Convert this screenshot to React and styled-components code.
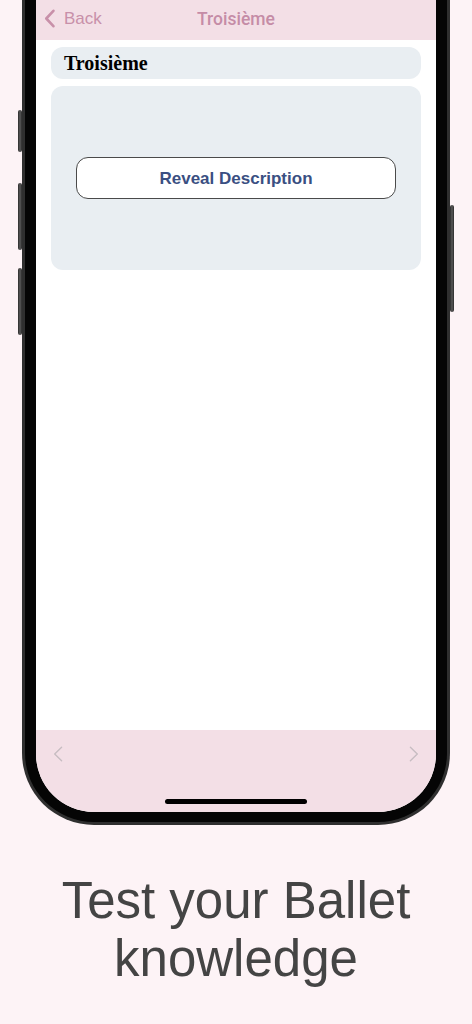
import React from "react";
import styled, { createGlobalStyle } from "styled-components";

const Global = createGlobalStyle`
  html, body { margin: 0; padding: 0; background: #fdf3f6; }
  body { font-family: "Liberation Sans", Arial, sans-serif; }
`;

const Page = styled.div`
  width: 472px;
  height: 1024px;
  overflow: hidden;
  display: flex;
  flex-direction: column;
  align-items: center;
  background: #fdf3f6;
`;

const Frame = styled.div`
  position: relative;
  width: 428px;
  box-sizing: border-box;
  background: #050505;
  border: 3px solid #2f2f2f;
  border-top: none;
  border-radius: 0 0 72px 72px;
  padding: 0 11px 10px;
`;

const SideButton = styled.div`
  position: absolute;
  width: 4px;
  top: ${(p) => p.$top}px;
  height: ${(p) => p.$h}px;
  ${(p) => (p.$right ? "right: -7px;" : "left: -7px;")}
  background: linear-gradient(90deg, #2a2a2a, #5a5a5a 50%, #2a2a2a);
  border-radius: 2px;
`;

const Screen = styled.div`
  position: relative;
  height: 812px;
  background: #ffffff;
  border-radius: 0 0 58px 58px;
  overflow: hidden;
  display: flex;
  flex-direction: column;
`;

const NavBar = styled.div`
  height: 40px;
  flex-shrink: 0;
  background: #f3dfe6;
  display: grid;
  grid-template-columns: 1fr auto 1fr;
  align-items: center;
  color: #c890a9;
  font-size: 17px;
  padding-bottom: 3px;
  box-sizing: border-box;
`;

const BackLink = styled.div`
  display: flex;
  align-items: center;
  gap: 8px;
  padding-left: 8px;
`;

const NavTitle = styled.div`
  font-family: Roboto, "Liberation Sans", Arial, sans-serif;
  font-weight: 500;
  font-size: 17.5px;
  color: #c58ca6;
`;

const Content = styled.div`
  flex: 1;
  padding: 7px 15px;
  display: flex;
  flex-direction: column;
  gap: 7px;
`;

const Card = styled.div`
  background: #e9eef2;
  border-radius: 12px;
`;

const TitleCard = styled(Card)`
  height: 32px;
  display: flex;
  align-items: center;
  padding: 0 13px;
  font-family: "Liberation Serif", "Times New Roman", serif;
  font-weight: bold;
  font-size: 20px;
  color: #000;
`;

const BodyCard = styled(Card)`
  height: 184px;
  display: flex;
  align-items: center;
  padding: 0 25px;
  box-sizing: border-box;
`;

const RevealButton = styled.button`
  width: 100%;
  height: 42px;
  background: #ffffff;
  border: 1px solid #4a4a4a;
  border-radius: 12px;
  font-family: "Liberation Sans", Arial, sans-serif;
  font-weight: bold;
  font-size: 17px;
  color: #3a4f82;
  padding: 2px 0 0;
`;

const BottomBar = styled.div`
  height: 82px;
  flex-shrink: 0;
  background: #f3dfe6;
  display: flex;
  flex-direction: column;
  padding: 16px 15px 8px;
  box-sizing: border-box;
`;

const ArrowRow = styled.div`
  display: flex;
  justify-content: space-between;
  padding: 0 2px;
`;

const HomeIndicator = styled.div`
  margin: auto auto 0;
  width: 142px;
  height: 5px;
  border-radius: 3px;
  background: #000;
`;

const Caption = styled.div`
  margin-top: 47px;
  font-family: "Liberation Sans", Arial, sans-serif;
  font-size: 51px;
  line-height: 58px;
  color: #444444;
  text-align: center;
`;

const Chevron = ({ dir = "left", color, w = 12, h = 18, sw = 2.6 }) => (
  <svg width={w} height={h} viewBox={`0 0 ${w} ${h}`} fill="none">
    <path
      d={
        dir === "left"
          ? `M${w - sw} ${sw / 2 + 0.5} L${sw / 2 + 1} ${h / 2} L${w - sw} ${h - sw / 2 - 0.5}`
          : `M${sw} ${sw / 2 + 0.5} L${w - sw / 2 - 1} ${h / 2} L${sw} ${h - sw / 2 - 0.5}`
      }
      stroke={color}
      strokeWidth={sw}
      strokeLinecap="round"
      strokeLinejoin="round"
    />
  </svg>
);

export default function App() {
  return (
    <Page>
      <Global />
      <Frame>
        <SideButton $top={110} $h={42} />
        <SideButton $top={183} $h={67} />
        <SideButton $top={268} $h={67} />
        <SideButton $right $top={205} $h={107} />
        <Screen>
          <NavBar>
            <BackLink>
              <Chevron dir="left" color="#c890a9" w={12} h={19} sw={2.6} />
              <span>Back</span>
            </BackLink>
            <NavTitle>Troisième</NavTitle>
            <div />
          </NavBar>
          <Content>
            <TitleCard>Troisième</TitleCard>
            <BodyCard>
              <RevealButton>Reveal Description</RevealButton>
            </BodyCard>
          </Content>
          <BottomBar>
            <ArrowRow>
              <Chevron dir="left" color="#c7bdc2" w={10} h={16} sw={1.4} />
              <Chevron dir="right" color="#c7bdc2" w={10} h={16} sw={1.4} />
            </ArrowRow>
            <HomeIndicator />
          </BottomBar>
        </Screen>
      </Frame>
      <Caption>
        Test your Ballet
        <br />
        knowledge
      </Caption>
    </Page>
  );
}
